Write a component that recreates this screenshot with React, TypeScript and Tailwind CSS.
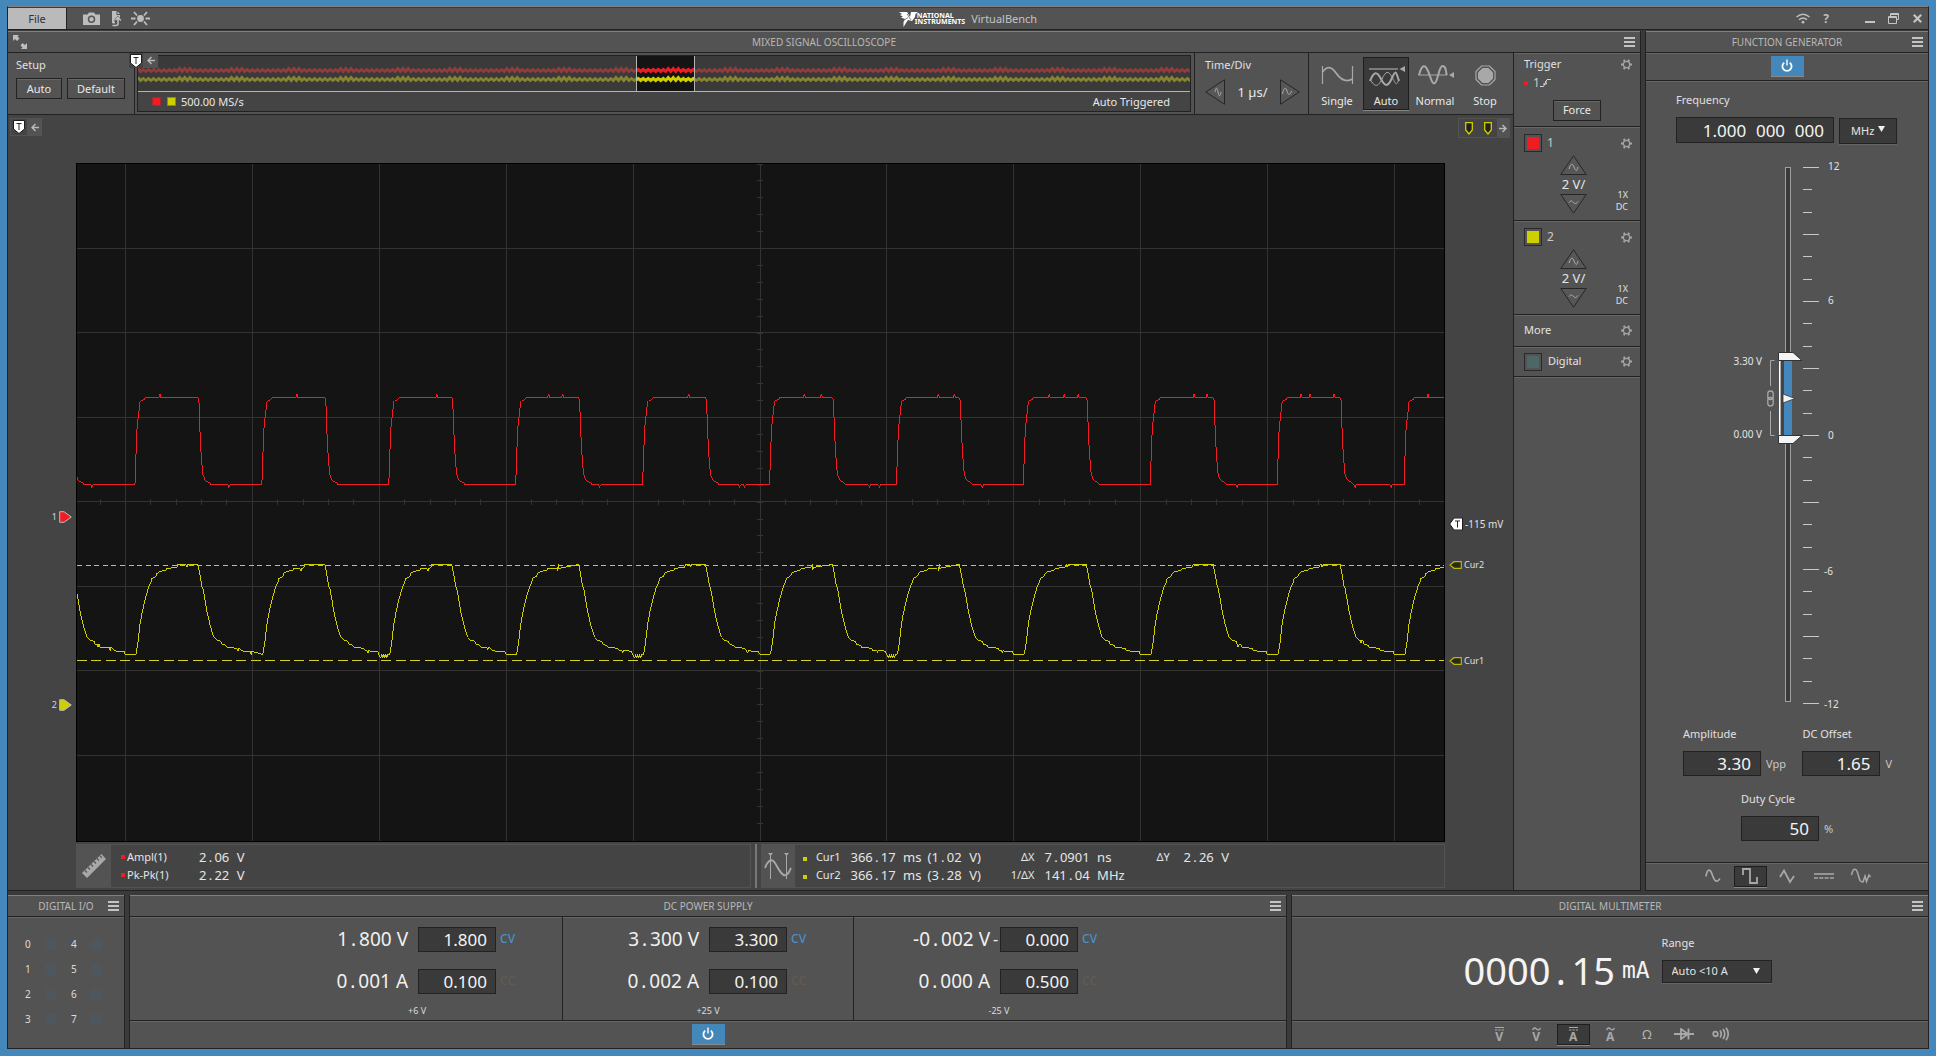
import React, { useId } from "react";

const UI = "font-['Noto_Sans',sans-serif]";

/* ---------- traces ---------- */

const PERIOD = 127;
const FIRST_EDGE = 58;
const VIEW_W = 1368;
const VIEW_H = 678;

const redCycle: [number, number][] = [
  [0, 321], [1, 292], [2, 266], [3, 256], [4, 248], [5, 238], [6, 237], [9, 236], [10, 234],
  [63, 234], [64, 237], [65, 266], [66, 287], [67, 300], [68, 311], [70, 316], [72, 318], [75, 319], [76, 321], [126, 321],
];

const yellowCycle: [number, number][] = [
  [1, 491], [3, 479], [5, 461], [7, 450], [9, 441], [11, 433], [14, 423], [16, 419], [17, 415], [21, 413], [22, 410],
  [25, 408], [31, 407], [32, 405], [42, 404], [43, 401], [63, 401], [65, 411], [67, 423], [68, 425], [70, 436],
  [72, 448], [75, 461], [77, 468], [79, 474], [82, 477], [86, 478], [87, 481], [91, 482], [92, 484], [102, 485], [103, 487],
  [108, 488], [116, 488], [117, 491], [127, 491],
];

const redSpikes = [83, 220, 360, 472, 486, 612, 728, 745, 755, 862, 878, 973, 988, 1002, 1118, 1131, 1225, 1234, 1258, 1352];
const redDips = [15, 152, 258, 261, 386, 523, 663, 668, 793, 803, 906, 1161, 1276, 1279, 1315];

const phase = (x: number) => (((x - FIRST_EDGE) % PERIOD) + PERIOD) % PERIOD;

function trace(cycle: [number, number][]) {
  const pts: [number, number][] = [];
  for (let c = -1; c < 12; c++) {
    for (const [x, y] of cycle) pts.push([FIRST_EDGE + c * PERIOD + x, y]);
  }
  return pts.filter(([x]) => x >= -3 && x <= VIEW_W + 60);
}

function withSpikes(pts: [number, number][]) {
  const extra: [number, number][] = [];
  redSpikes
    .filter((x) => phase(x) > 12 && phase(x) < 61)
    .forEach((x) => extra.push([x - 1, 234], [x, 230], [x + 1, 234]));
  redDips
    .filter((x) => phase(x) > 77 && phase(x) < 124)
    .forEach((x) => extra.push([x - 1, 321], [x, 324], [x + 1, 321]));
  return [...pts, ...extra].sort((a, b) => a[0] - b[0]);
}

const toPath = (pts: [number, number][]) => "M" + pts.map((p) => p.join(" ")).join("L");

const RED_PATH = toPath(withSpikes(trace(redCycle)));

const yellowBase = trace(yellowCycle);
const yellowJitter: [number, number][] = [];
[20, 32, 109, 160, 173, 223, 290, 350, 410, 480, 545, 613, 670, 735, 800, 861, 925, 990, 1161, 1245, 1284].forEach((x) => {
  const i = yellowBase.findIndex((p) => p[0] > x);
  if (i > 0) {
    const y = yellowBase[i - 1][1];
    yellowJitter.push([x, y], [x + 1, y + 3], [x + 2, y]);
  }
});
[304, 558, 812].forEach((x) => {
  for (let k = 0; k < 4; k++) yellowJitter.push([x + k * 2, 495], [x + k * 2 + 1, 491]);
});
const YELLOW_PATH = toPath([...yellowBase, ...yellowJitter].sort((a, b) => a[0] - b[0]));

const PREVIEW_W = 1053;
function zigzag(top: number, depth: number) {
  let d = "M0 " + top;
  for (let i = 1; i * 2.6 < PREVIEW_W + 4; i++) {
    const low = i % 2 === 1;
    const beat = i % 21 > 14 ? 0 : 1;
    d += `L${(i * 2.6).toFixed(1)} ${low ? top + depth : top + beat}`;
  }
  return d;
}
const PREVIEW_RED = zigzag(12.5, 3);
const PREVIEW_YELLOW = zigzag(21.5, 3);

/* ---------- small pieces ---------- */

/** Digits with the decimal point set in a cell as wide as a digit. */
function Num({ v, dot }: { v: string; dot: string }) {
  const parts = v.replace(/ /g, "\u2007").split(".");
  return (
    <>
      {parts[0]}
      {parts.length > 1 && <span className={`inline-block text-center ${dot}`}>.</span>}
      {parts[1]}
    </>
  );
}

function MenuButton({ label }: { label: string }) {
  return (
    <button aria-label={label} className="flex h-[10px] w-[11px] flex-col justify-between">
      <span className="h-[2px] w-full bg-[#c4c4c4]" />
      <span className="h-[2px] w-full bg-[#c4c4c4]" />
      <span className="h-[2px] w-full bg-[#c4c4c4]" />
    </button>
  );
}

function PanelHeader({ title, children }: { title: string; children?: React.ReactNode }) {
  return (
    <header className="grid h-[22px] shrink-0 grid-cols-[1fr_auto_1fr] items-center border-t border-b border-t-[#808080] border-b-[#222] px-[5px]">
      <div className="flex">{children}</div>
      <h2 className="text-[10px] leading-3 whitespace-nowrap text-[#b8b8b8]">{title}</h2>
      <div className="flex justify-end">
        <MenuButton label={`${title} menu`} />
      </div>
    </header>
  );
}

function PushButton({ children, className = "" }: { children: React.ReactNode; className?: string }) {
  return (
    <button
      className={`h-[21px] border border-[#222] bg-[#535353] text-[11px] leading-4 text-[#e8e8e8] shadow-[inset_0_1px_0_#666] ${className}`}
    >
      {children}
    </button>
  );
}

function Gear({ label }: { label: string }) {
  return (
    <button aria-label={label} className="size-[11px]">
      <svg viewBox="0 0 11 11" className="size-[11px]" fill="none" stroke="#a6a6a6">
        <circle cx="5.5" cy="5.5" r="3.2" strokeWidth="1.3" />
        <path
          d="M9 5.5H11M0 5.5H2M7.2 2.5L8.2.8M3.8 8.5L2.8 10.2M7.2 8.5L8.2 10.2M3.8 2.5L2.8.8"
          strokeWidth="2"
        />
      </svg>
    </button>
  );
}

function PowerButton({ label }: { label: string }) {
  return (
    <button
      aria-label={label}
      className="flex h-[21px] w-[33px] items-center justify-center border-b border-[#8a8a8a] bg-[#4487bb]"
    >
      <svg viewBox="0 0 14 14" className="size-[14px]" fill="none" stroke="#fff">
        <path d="M4.2 3.6A4.6 4.6 0 1 0 9.8 3.6" strokeWidth="1.8" />
        <path d="M7 .5V6.5" strokeWidth="1.4" />
      </svg>
    </button>
  );
}

function IconToggle({ label, active, children }: { label: string; active?: boolean; children: React.ReactNode }) {
  return (
    <button
      aria-label={label}
      aria-pressed={!!active}
      className={
        active
          ? "flex h-[21px] w-[33px] items-center justify-center border border-[#1e1e1e] bg-[#3a3a3a] shadow-[0_1px_0_#858585]"
          : "flex h-[21px] w-[33px] items-center justify-center"
      }
    >
      {children}
    </button>
  );
}

function NumberField({ label, value, className }: { label: string; value: string; className: string }) {
  return (
    <input
      aria-label={label}
      defaultValue={value}
      className={`rounded-none border border-[#222] bg-[#3a3a3a] pr-2 text-right text-[17px] leading-5 text-[#f4f4f4] ${className}`}
    />
  );
}

function TTag() {
  return (
    <svg viewBox="0 0 12 14" className="h-[14px] w-3 shrink-0" role="img" aria-label="Trigger position">
      <path d="M.5.5H11.5V9L6 13.5L.5 9Z" fill="#fff" stroke="#1c1c1c" />
      <path d="M3.5 3.5H8.5M6 3.5V10" stroke="#2a2a2a" fill="none" />
    </svg>
  );
}

function Arrow({ right }: { right?: boolean }) {
  return (
    <svg viewBox="0 0 8 9" className="h-[9px] w-2 shrink-0" fill="none" stroke="#b8b8b8" strokeWidth="1.5">
      {right ? <path d="M0 4.5H7M3.5 1L7 4.5L3.5 8" /> : <path d="M8 4.5H1M4.5 1L1 4.5L4.5 8" />}
    </svg>
  );
}

/* ---------- title bar ---------- */

function TitleBar() {
  return (
    <header className="grid h-[21px] shrink-0 grid-cols-[1fr_auto_1fr] items-center bg-[#535353]">
      <div className="flex h-[21px] items-center">
        <button className="h-full w-[59px] border-r border-[#222] bg-[#bababa] text-[11px] leading-4 text-[#333]">File</button>
        <button aria-label="Screenshot" className="ml-4">
          <svg viewBox="0 0 17 13" className="h-[13px] w-[17px]">
            <path d="M0 2.5H4.5L6 .5H11L12.5 2.5H17V13H0Z" fill="#bdbdbd" />
            <circle cx="8.5" cy="7.2" r="3" fill="#bdbdbd" stroke="#555" strokeWidth="1.5" />
          </svg>
        </button>
        <button aria-label="Export" className="ml-[11px]">
          <svg viewBox="0 0 11 16" className="h-4 w-[11px]">
            <path d="M1 0H5.5V4H9V7L7 4.8L3.5 8.500V12H1Z" fill="#bdbdbd" />
            <path d="M6.500 .5V3H9Z" fill="#bdbdbd" />
            <path d="M4.500 9L7 6.500L9.800 9.500M7 7V12.500Q7 14.500 5 14.500H1.500M1.500 11.800H4" stroke="#bdbdbd" strokeWidth="1.600" fill="none" />
          </svg>
        </button>
        <button aria-label="Backlight" className="ml-[9px]">
          <svg viewBox="0 0 19 15" className="h-[15px] w-[19px]" stroke="#bdbdbd" strokeWidth="1.800">
            <circle cx="9.500" cy="7.500" r="3.400" fill="#bdbdbd" stroke="none" />
            <path d="M0 7.500H4.500M14.500 7.500H19M3 1L6 4.500M16 1L13 4.500M3 14L6 10.500M16 14L13 10.500" fill="none" />
          </svg>
        </button>
      </div>
      <div className="flex items-center">
        <svg viewBox="0 0 20 16" className="h-4 w-5" role="img" aria-label="National Instruments eagle">
          <path d="M0 1H8L11 6L12 1H19L16.500 3L16 6L13 10L9 9L7 12L4.500 16V11L6 8L2 6.500L4 5.500L1 4L3 3Z" fill="#fff" />
          <path d="M8 3L12 9M5 9L9 6.500" stroke="#535353" strokeWidth=".7" />
        </svg>
        <div className="-ml-1 text-[7px] leading-[6px] font-bold text-white">
          <div className="pl-[2px]">NATIONAL</div>
          <div>INSTRUMENTS</div>
        </div>
        <h1 className="ml-[6px] text-[11px] leading-4 text-[#c4c4c4]">VirtualBench</h1>
      </div>
      <div className="flex items-center justify-end pr-[6px]">
        <svg viewBox="0 0 14 11" className="h-[11px] w-[14px]" fill="none" stroke="#bdbdbd" strokeWidth="1.500" role="img" aria-label="Wireless">
          <path d="M.5 4Q7-1.500 13.500 4M3 6.700Q7 3.200 11 6.700" />
          <circle cx="7" cy="9.200" r="1.400" fill="#bdbdbd" stroke="none" />
        </svg>
        <button aria-label="Help" className="ml-[10px] w-3 text-[12px] leading-4 font-bold text-[#bdbdbd]">?</button>
        <button aria-label="Minimize" className="ml-[33px] flex h-3 w-[10px] items-end pb-[2px]">
          <span className="h-[2px] w-full bg-[#c4c4c4]" />
        </button>
        <button aria-label="Restore" className="ml-[13px]">
          <svg viewBox="0 0 11 11" className="size-[11px]" fill="none" stroke="#c4c4c4">
            <path d="M2.500 3.500V.5H10.500V6.500H8.500M2.500 1.500H10.500" />
            <path d="M.5 3.500H8.500V10.500H.5ZM.5 4.500H8.500" />
          </svg>
        </button>
        <button aria-label="Close" className="ml-[14px]">
          <svg viewBox="0 0 9 9" className="size-[9px]" stroke="#c4c4c4" strokeWidth="2.200">
            <path d="M.8.8L8.200 8.200M8.200.8L.8 8.200" />
          </svg>
        </button>
      </div>
    </header>
  );
}

/* ---------- oscilloscope toolbar ---------- */

function PreviewTraces({ red, yellow }: { red: string; yellow: string }) {
  return (
    <svg viewBox="0 0 1053 35" preserveAspectRatio="none" className="h-full w-full" fill="none" strokeWidth="2.800">
      <path d={PREVIEW_RED} stroke={red} />
      <path d={PREVIEW_YELLOW} stroke={yellow} />
    </svg>
  );
}

function Preview() {
  return (
    <div className="relative my-[2px] mr-[3px] ml-[2px] flex min-w-0 flex-1 flex-col border border-[#222] bg-[#444]">
      <div className="relative h-[36px] border-b border-[#b4b4b4] bg-[#3a3a3a]">
        <PreviewTraces red="#933c3e" yellow="#868430" />
        <div className="absolute inset-y-0 left-[47.300%] w-[5.600%] overflow-hidden border-x border-[#b4b4b4] bg-[#141414]">
          <svg viewBox="498 0 59 35" preserveAspectRatio="none" className="h-full w-full" fill="none" strokeWidth="3">
            <path d={PREVIEW_RED} stroke="#f01c24" />
            <path d={PREVIEW_YELLOW} stroke="#cfcf00" />
          </svg>
        </div>
      </div>
      <div className="flex flex-1 items-center px-3 text-[11px] leading-4 text-[#e8e8e8]">
        <span className="mr-[6px] ml-[2px] size-[9px] border border-[#a3272b] bg-[#f01c24]" />
        <span className="mr-[5px] size-[9px] border border-[#8a8a20] bg-[#cfcf00]" />
        <span className="flex-1">500.00 MS/s</span>
        <span className="mr-2">Auto Triggered</span>
      </div>
      <div className="absolute -top-[3px] -left-[9px] flex h-[15px] w-[29px] items-center justify-between bg-[#535353] pr-[3px]">
        <span className="flex h-full w-[14px] items-center justify-center bg-[#444]">
          <TTag />
        </span>
        <Arrow />
      </div>
    </div>
  );
}

function SideArrow({ right, label }: { right?: boolean; label: string }) {
  return (
    <button aria-label={label}>
      <svg viewBox="0 0 20 26" className="h-[26px] w-5" fill="none">
        <g transform={right ? "translate(20 0) scale(-1 1)" : undefined}>
          <path d="M19.500.8V25.200L.8 13Z" stroke="#262626" fill="#575757" />
        </g>
        {right ? (
          <path d="M2.500 15C4 8 6 8 7 12S10 17 11.500 12" stroke="#b0b0b0" />
        ) : (
          <path d="M10 13C11 8 12 8 13 13S15 18 16 13" stroke="#b0b0b0" />
        )}
      </svg>
    </button>
  );
}

function ModeButton({ label, active, width, children }: { label: string; active?: boolean; width: string; children: React.ReactNode }) {
  return (
    <button
      aria-pressed={!!active}
      className={`flex h-[53px] flex-col items-center border text-[11px] leading-4 text-[#e8e8e8] ${width} ${
        active ? "border-[#1e1e1e] bg-[#3a3a3a] shadow-[0_1px_0_#858585]" : "border-transparent"
      }`}
    >
      <svg viewBox="0 0 37 24" className="mt-[5px] mb-[6px] h-6 w-[37px]" fill="none" stroke="#a8a8a8" strokeWidth="1.600">
        {children}
      </svg>
      {label}
    </button>
  );
}

function ScopeToolbar() {
  return (
    <div className="flex h-[62px] shrink-0 border-b border-[#222]">
      <div className="w-[127px] border-r border-[#222] pt-1 pl-2">
        <h3 className="text-[11px] leading-4 text-[#e0e0e0]">Setup</h3>
        <div className="mt-[5px] flex gap-[5px]">
          <PushButton className="w-[46px]">Auto</PushButton>
          <PushButton className="w-[58px]">Default</PushButton>
        </div>
      </div>
      <Preview />
      <div className="w-[115px] border-x border-[#222] pt-1 pr-2 pl-[10px]">
        <h3 className="text-[11px] leading-4 text-[#e0e0e0]">Time/Div</h3>
        <div className="mt-[6px] flex items-center justify-between">
          <SideArrow label="Decrease time per division" />
          <span className="text-[13px] leading-4 text-[#e8e8e8]">1 µs/</span>
          <SideArrow right label="Increase time per division" />
        </div>
      </div>
      <div className="flex w-[204px] justify-center gap-[2px] pt-1">
        <ModeButton label="Single" width="w-12">
          <path d="M3.500 3V21M33.500 3V21" strokeWidth="1.200" />
          <path d="M3.500 9C8 3 12 3 17 10S27 20 33.500 16" strokeWidth="1.800" />
        </ModeButton>
        <ModeButton label="Auto" active width="w-[46px]">
          <path d="M1 6H30" strokeWidth="1.200" />
          <path d="M37 3V9L31.500 6Z" fill="#a8a8a8" stroke="none" />
          <path d="M2 18C6 8 9 8 13 16S20 24 24 15S28 9 31 18" strokeWidth="2" />
          <path d="M2 16C7 25 10 24 14 16S20 7 24 14S28 24 31 16" strokeWidth="1" />
        </ModeButton>
        <ModeButton label="Normal" width="w-12">
          <path d="M1 12H30" strokeWidth="1" />
          <path d="M37 9V15L32 12Z" fill="#a8a8a8" stroke="none" />
          <path d="M2 12C5 1 8 1 11 8S15 22 18 20S22 2 26 3S28 8 30 12" strokeWidth="2" />
        </ModeButton>
        <ModeButton label="Stop" width="w-12">
          <path d="M14.500 3H22.500L28 8.500V16.500L22.500 22H14.500L9 16.500V8.500Z" strokeWidth="1.200" />
          <path d="M15.500 5H21.500L26 9.500V15.500L21.500 20H15.500L11 15.500V9.500Z" fill="#a8a8a8" stroke="none" />
        </ModeButton>
      </div>
    </div>
  );
}

/* ---------- oscilloscope chart ---------- */

const GRID_X = Array.from({ length: 11 }, (_, i) => 48.5 + i * 127);
const GRID_Y = Array.from({ length: 7 }, (_, i) => 84.5 + i * 84.6);
const TICK_X = Array.from({ length: 54 }, (_, i) => 23.1 + i * 25.4).filter((x) => x < VIEW_W);
const TICK_Y = Array.from({ length: 40 }, (_, i) => i * 16.93);

function Chart() {
  return (
    <svg
      viewBox={`0 0 ${VIEW_W} ${VIEW_H}`}
      preserveAspectRatio="none"
      className="absolute inset-0 h-full w-full"
      fill="none"
      role="img"
      aria-label="Oscilloscope traces"
    >
      <g stroke="#333" shapeRendering="crispEdges">
        {GRID_X.map((x) => <path key={`x${x}`} d={`M${x} 0V${VIEW_H}`} />)}
        {GRID_Y.map((y) => <path key={`y${y}`} d={`M0 ${y}H${VIEW_W}`} />)}
        {TICK_X.map((x) => <path key={`tx${x}`} d={`M${x} 335V342`} />)}
        {TICK_Y.map((y) => <path key={`ty${y}`} d={`M680 ${y}H687`} />)}
      </g>
      <path d="M0 402.500H1368" stroke="#cfcf00" strokeDasharray="5 3.600" shapeRendering="crispEdges" />
      <path d="M0 497.500H1368" stroke="#d4d030" strokeDasharray="10 4.500" shapeRendering="crispEdges" />
      <path d={RED_PATH} stroke="#f01c24" shapeRendering="crispEdges" />
      <path d={YELLOW_PATH} stroke="#cfcf00" shapeRendering="crispEdges" />
    </svg>
  );
}

function ChannelMarker({ n, color, top }: { n: string; color: string; top: string }) {
  return (
    <div className={`absolute right-1 flex -translate-y-1/2 items-center gap-[2px] text-[9px] leading-3 text-[#d8d8d8] ${top}`}>
      {n}
      <svg viewBox="0 0 13 12" className="h-3 w-[13px]">
        <path d="M.7.700H5L12.300 6L5 11.300H.7Z" fill={color} stroke="#bbb" />
      </svg>
    </div>
  );
}

function CursorMarker({ label, top }: { label: string; top: string }) {
  return (
    <div className={`absolute left-1 flex -translate-y-1/2 items-center gap-[2px] text-[9px] leading-3 text-[#e0e0e0] ${top}`}>
      <svg viewBox="0 0 13 8" className="h-2 w-[13px]">
        <path d="M12.300.7H5L1 4L5 7.300H12.300Z" fill="#2a2a14" stroke="#b8b410" strokeWidth="1.200" />
      </svg>
      {label}
    </div>
  );
}

function Bullet({ className }: { className: string }) {
  return <span className={`inline-block size-1 shrink-0 ${className}`} />;
}

function Readouts() {
  const dot = "w-2";
  return (
    <div className="mt-[2px] flex h-[44px] text-[13px] leading-[18px] text-[#e6e6e6]">
      <div className="flex flex-1 border border-[#535353]">
        <button aria-label="Measurements" className="flex w-[34px] items-center justify-center bg-[#535353]">
          <svg viewBox="0 0 26 26" className="size-[26px]">
            <path d="M1 20L20.500 1L25 6L6 25Z" fill="#a8a8a8" />
            <path d="M4 17.500L6 19.500M7 14.500L9 16.500M10 11.500L12 13.500M13 8.500L15 10.500M16 5.500L18 7.500M19 2.800L21 4.800" stroke="#535353" strokeWidth="1.200" />
          </svg>
        </button>
        <dl className="grid grid-cols-[78px_auto] content-center pl-[10px]">
          <dt className="flex items-center text-[11px]"><Bullet className="mr-[2px] bg-[#f01c24]" />Ampl(1)</dt>
          <dd><Num v="2.06 V" dot={dot} /></dd>
          <dt className="flex items-center text-[11px]"><Bullet className="mr-[2px] bg-[#f01c24]" />Pk-Pk(1)</dt>
          <dd><Num v="2.22 V" dot={dot} /></dd>
        </dl>
      </div>
      <div className="mx-[4px] w-[2px] bg-[#787878]" />
      <div className="flex w-[50%] border border-[#535353]">
        <button aria-label="Cursors" className="flex w-[33px] items-center justify-center bg-[#535353]">
          <svg viewBox="0 0 28 28" className="size-7" fill="none" stroke="#a8a8a8">
            <path d="M6.500 2V27M22.500 2V27" />
            <path d="M4 1H9L6.500 4ZM20 1H25L22.500 4Z" fill="#a8a8a8" stroke="none" />
            <path d="M1 16C4 8 8 6 11 11S18 25 22 23S26 17 27 16" strokeWidth="1.800" />
          </svg>
        </button>
        <table className="my-auto ml-2 table-fixed border-collapse whitespace-nowrap">
          <colgroup>
            <col className="w-3" />
            <col className="w-[26px]" />
            <col className="w-[87px]" />
            <col className="w-[64px]" />
            <col className="w-[43px]" />
            <col className="w-[122px]" />
            <col className="w-[27px]" />
            <col className="w-[60px]" />
          </colgroup>
          <tbody>
            <tr>
              <td className="p-0"><Bullet className="bg-[#cfcf00] align-middle" /></td>
              <th scope="row" className="p-0 text-right text-[11px] font-normal">Cur1</th>
              <td className="p-0 pl-[10px]"><Num v="366.17 ms" dot={dot} /></td>
              <td className="p-0"><Num v="(1.02 V)" dot={dot} /></td>
              <td className="p-0 text-right text-[11px]">ΔX</td>
              <td className="p-0 pl-[10px]"><Num v="7.0901 ns" dot={dot} /></td>
              <td className="p-0 text-[11px]">ΔY</td>
              <td className="p-0"><Num v="2.26 V" dot={dot} /></td>
            </tr>
            <tr>
              <td className="p-0"><Bullet className="bg-[#cfcf00] align-middle" /></td>
              <th scope="row" className="p-0 text-right text-[11px] font-normal">Cur2</th>
              <td className="p-0 pl-[10px]"><Num v="366.17 ms" dot={dot} /></td>
              <td className="p-0"><Num v="(3.28 V)" dot={dot} /></td>
              <td className="p-0 text-right text-[11px]">1/ΔX</td>
              <td className="p-0 pl-[10px]"><Num v="141.04 MHz" dot={dot} /></td>
              <td className="p-0" />
              <td className="p-0" />
            </tr>
          </tbody>
        </table>
      </div>
    </div>
  );
}

function ScopeBody() {
  return (
    <div className="flex flex-1 flex-col bg-[#444] pb-[2px]">
      <div className="flex h-[48px] shrink-0 items-start justify-between pt-[3px] pr-[3px] pl-[2px]">
        <div className="flex h-[18px] w-[32px] items-center justify-between border border-[#535353] bg-[#535353] pr-[2px]">
          <span className="flex h-full w-4 items-center justify-center bg-[#444]"><TTag /></span>
          <Arrow />
        </div>
        <div className="flex h-5 w-[52px] items-center justify-between border border-[#535353] bg-[#535353] pr-[2px]">
          <span className="flex h-full w-[38px] items-center justify-around bg-[#444]">
            {[0, 1].map((i) => (
              <svg key={i} viewBox="0 0 8 13" className="h-[13px] w-2">
                <path d="M.7.700H7.300V8L4 12L.7 8Z" fill="#222" stroke="#cfcf00" strokeWidth="1.300" />
              </svg>
            ))}
          </span>
          <Arrow right />
        </div>
      </div>
      <div className="flex flex-1">
        <div className="relative w-[68px] shrink-0">
          <ChannelMarker n="1" color="#f01c24" top="top-[52.200%]" />
          <ChannelMarker n="2" color="#cfcf00" top="top-[79.800%]" />
        </div>
        <div className="flex min-w-0 flex-1 flex-col">
          <div className="relative flex-1 border border-black bg-[#141414]">
            <Chart />
          </div>
        </div>
        <div className="relative w-[68px] shrink-0">
          <div className="absolute top-[53.100%] left-1 flex -translate-y-1/2 items-center gap-[2px] text-[10px] leading-3 whitespace-nowrap text-[#e0e0e0]">
            <svg viewBox="0 0 14 13" className="h-[13px] w-[14px]">
              <path d="M13.500.5H5L.7 6.500L5 12.500H13.500Z" fill="#fff" stroke="#1c1c1c" />
              <path d="M6 3.500H11M8.500 3.500V10" stroke="#2a2a2a" />
            </svg>
            -115 mV
          </div>
          <CursorMarker label="Cur2" top="top-[59.200%]" />
          <CursorMarker label="Cur1" top="top-[73.300%]" />
        </div>
      </div>
      <div className="px-[68px]">
        <Readouts />
      </div>
    </div>
  );
}

/* ---------- channel column ---------- */

function ColorCheck({ label, color }: { label: string; color: string }) {
  return (
    <input
      type="checkbox"
      defaultChecked
      aria-label={label}
      className={`size-[18px] appearance-none border border-[#2a2a2a] shadow-[inset_0_0_0_2px_#535353] ${color}`}
    />
  );
}

function TriButton({ down, label }: { down?: boolean; label: string }) {
  return (
    <button aria-label={label}>
      <svg viewBox="0 0 27 20" className="h-5 w-[27px]" fill="none">
        {down ? (
          <>
            <path d="M.8.500H26.200L13.500 19.200Z" fill="#575757" stroke="#262626" />
            <path d="M9 8.500C11 6 12 7 13.500 8.500S16 10 18 7.500" stroke="#b0b0b0" />
          </>
        ) : (
          <>
            <path d="M.8 19.500H26.200L13.500.8Z" fill="#575757" stroke="#262626" />
            <path d="M9 14C11 8 12.500 8 14 12S17 17 18 12" stroke="#b0b0b0" />
          </>
        )}
      </svg>
    </button>
  );
}

const sectionEdge = "border-b border-[#222] shadow-[inset_0_1px_0_#666]";

function Channel({ n, color }: { n: string; color: string }) {
  return (
    <section className={`h-[94px] pt-[7px] pr-2 pl-[10px] ${sectionEdge}`}>
      <div className="flex items-center">
        <ColorCheck label={`Channel ${n}`} color={color} />
        <span className="ml-[5px] flex-1 text-[12px] leading-4 text-[#c8c8c8]">{n}</span>
        <Gear label={`Channel ${n} settings`} />
      </div>
      <div className="mt-[3px] grid grid-cols-[36px_27px_1fr] items-end">
        <span />
        <div className="flex flex-col items-center">
          <TriButton label={`Channel ${n} scale up`} />
          <span className="text-[13px] leading-[19px] whitespace-nowrap text-[#e4e4e4]">2 V/</span>
          <TriButton down label={`Channel ${n} scale down`} />
        </div>
        <div className="pr-1 pb-px text-right text-[9px] leading-3 text-[#e0e0e0]">
          1X
          <br />
          DC
        </div>
      </div>
    </section>
  );
}

function ChannelColumn() {
  return (
    <aside className="flex w-[127px] shrink-0 flex-col border-l border-[#222] bg-[#535353]">
      <section className={`h-[74px] pt-[2px] pr-2 pl-[10px] ${sectionEdge}`}>
        <div className="flex items-center justify-between">
          <h3 className="text-[11px] leading-[18px] text-[#e0e0e0]">Trigger</h3>
          <Gear label="Trigger settings" />
        </div>
        <div className="flex items-center text-[12px] leading-5 text-[#c8c8c8]">
          <Bullet className="mr-[5px] bg-[#f01c24]" />1
          <svg viewBox="0 0 11 8" className="h-2 w-[11px]" fill="none" stroke="#d0d0d0" role="img" aria-label="Rising edge">
            <path d="M0 7.500H3.500L7 .5H11M3 5H6.500L5.500 2" />
          </svg>
        </div>
        <div className="mt-[3px] pl-[29px]">
          <PushButton className="w-12">Force</PushButton>
        </div>
      </section>
      <Channel n="1" color="bg-[#f01c24]" />
      <Channel n="2" color="bg-[#cfcf00]" />
      <section className={`flex h-[32px] items-center justify-between pr-2 pl-[10px] ${sectionEdge}`}>
        <h3 className="text-[11px] text-[#e4e4e4]">More</h3>
        <Gear label="More settings" />
      </section>
      <section className={`flex h-[30px] items-center pr-2 pl-[10px] ${sectionEdge}`}>
        <ColorCheck label="Digital" color="bg-[#4d6666]" />
        <span className="ml-[6px] flex-1 text-[11px] text-[#e4e4e4]">Digital</span>
        <Gear label="Digital settings" />
      </section>
      <div className="flex-1 shadow-[inset_0_1px_0_#666]" />
    </aside>
  );
}

function Oscilloscope() {
  return (
    <section className="flex min-w-0 flex-1 flex-col border-r border-b border-[#222] bg-[#535353]">
      <PanelHeader title="MIXED SIGNAL OSCILLOSCOPE">
        <button aria-label="Expand panel">
          <svg viewBox="0 0 14 14" className="size-[14px]" fill="#bdbdbd">
            <path d="M0 0H6L4.500 1.500L6.500 3.500L4 6L2 4L0 6Z" />
            <path d="M14 14H8L9.500 12.500L7.500 10.500L9.500 8L12 10L14 8Z" />
          </svg>
        </button>
      </PanelHeader>
      <div className="flex flex-1">
        <div className="flex min-w-0 flex-1 flex-col">
          <ScopeToolbar />
          <ScopeBody />
        </div>
        <ChannelColumn />
      </div>
    </section>
  );
}

/* ---------- function generator ---------- */

const TICKS = Array.from({ length: 25 }, (_, i) => i);

function OffsetSlider() {
  return (
    <div className="relative ml-[84px] mt-[22px] h-[538px] w-[110px]">
      <svg viewBox="0 0 110 538" className="h-[538px] w-[110px]" fill="none" aria-hidden="true">
        <rect x="55.500" y="1.500" width="5" height="534" fill="#3a3a3a" stroke="#a0a0a0" />
        <g stroke="#c8c8c8" shapeRendering="crispEdges">
          {TICKS.map((i) => (
            <path key={i} d={`M73 ${(1.5 + i * 22.33).toFixed(1)}h${i % 3 === 0 ? 16 : 9}`} />
          ))}
        </g>
        <rect x="54" y="193" width="8" height="77" fill="#4487bb" />
        <rect x="49" y="190" width="1.500" height="82" fill="#fff" />
        <rect x="51" y="193" width="3" height="77" fill="#444" />
        <path d="M48.500 186.500H63L72 194.500H48.500Z" fill="#f4f4f4" stroke="#333" />
        <path d="M48.500 277.500H63L72 269.500H48.500Z" fill="#f4f4f4" stroke="#333" />
        <path d="M53 228V237L65 232.500Z" fill="#f4f4f4" stroke="#333" strokeWidth=".8" />
        <path d="M44.500 194.500H40.500V220M40.500 245V269.500H44.500" stroke="#a8a8a8" />
        <g stroke="#a8a8a8" strokeWidth="1.300">
          <rect x="37.800" y="225" width="5.400" height="8.500" rx="2.700" />
          <rect x="37.800" y="231.500" width="5.400" height="8.500" rx="2.700" />
        </g>
      </svg>
      <input type="range" aria-label="High level in volts" min={-12} max={12} step={0.01} defaultValue={3.3} className="sr-only" />
      <input type="range" aria-label="Low level in volts" min={-12} max={12} step={0.01} defaultValue={0} className="sr-only" />
      <div className="text-[10px] leading-3 whitespace-nowrap text-[#e4e4e4]">
        <span className="absolute top-[189px] right-[78px]">3.30 V</span>
        <span className="absolute top-[262px] right-[78px]">0.00 V</span>
        <span className="absolute -top-[6px] left-[98px]">12</span>
        <span className="absolute top-[128px] left-[98px]">6</span>
        <span className="absolute top-[263px] left-[98px]">0</span>
        <span className="absolute top-[399px] left-[94px]">-6</span>
        <span className="absolute top-[532px] left-[94px]">-12</span>
      </div>
    </div>
  );
}

function LabeledField({ label, unit, value }: { label: string; unit: string; value: string }) {
  const id = useId();
  return (
    <div>
      <label htmlFor={id} className="block text-[11px] leading-4 text-[#e0e0e0]">{label}</label>
      <div className="mt-[9px] flex items-center gap-[5px] text-[11px] text-[#c8c8c8]">
        <input
          id={id}
          defaultValue={value}
          className="h-[25px] w-[78px] border border-[#222] bg-[#3a3a3a] pr-[9px] text-right text-[17px] leading-5 text-[#f4f4f4]"
        />
        {unit}
      </div>
    </div>
  );
}

function Caret({ className }: { className: string }) {
  return (
    <svg viewBox="0 0 7 6" className={`pointer-events-none absolute h-[6px] w-[7px] ${className}`} fill="#f0f0f0" aria-hidden="true">
      <path d="M0 0H7L3.500 6Z" />
    </svg>
  );
}

function FunctionGenerator() {
  return (
    <section className="flex w-[283px] shrink-0 flex-col border-b border-l border-[#222] bg-[#535353]">
      <PanelHeader title="FUNCTION GENERATOR" />
      <div className="flex h-[28px] items-center justify-center border-b border-[#222] shadow-[inset_0_1px_0_#666]">
        <PowerButton label="Function generator power" />
      </div>
      <div className="flex flex-1 flex-col pt-[11px] shadow-[inset_0_1px_0_#666]">
        <div className="px-[30px]">
          <label htmlFor="frequency" className="block text-[11px] leading-4 text-[#e0e0e0]">Frequency</label>
          <div className="mt-[9px] flex gap-[5px]">
            <input
              id="frequency"
              defaultValue={"1.000\u2007000\u2007000"}
              className="h-[26px] w-[158px] border border-[#222] bg-[#3a3a3a] pr-[9px] text-right text-[17px] leading-5 text-[#f4f4f4]"
            />
            <div className="relative">
              <select aria-label="Frequency unit" className="h-[26px] w-[58px] appearance-none rounded-none border border-[#222] bg-[#3a3a3a] pl-[11px] text-[11px] text-[#e4e4e4] shadow-[0_1px_0_#666]">
                <option>MHz</option>
                <option>kHz</option>
                <option>Hz</option>
              </select>
              <Caret className="top-[9px] right-3" />
            </div>
          </div>
        </div>
        <OffsetSlider />
        <div className="mt-[22px] flex justify-between pr-[36px] pl-[37px]">
          <LabeledField label="Amplitude" unit="Vpp" value="3.30" />
          <LabeledField label="DC Offset" unit="V" value="1.65" />
        </div>
        <div className="mt-[15px] flex justify-center">
          <LabeledField label="Duty Cycle" unit="%" value="50" />
        </div>
      </div>
      <div className="flex h-[28px] items-center justify-center gap-1 border-t border-[#222] pb-px shadow-[inset_0_1px_0_#666]">
        <IconToggle label="Sine wave">
          <svg viewBox="0 0 16 16" className="size-4" fill="none" stroke="#a8a8a8" strokeWidth="1.700">
            <path d="M1 8.500C2 1 5 0 7 6S11 16 15 10.500" />
          </svg>
        </IconToggle>
        <IconToggle label="Square wave" active>
          <svg viewBox="0 0 16 16" className="size-4" fill="none" stroke="#a8a8a8" strokeWidth="1.800">
            <path d="M1 7V1H8V15H15V9" />
          </svg>
        </IconToggle>
        <IconToggle label="Triangle wave">
          <svg viewBox="0 0 16 16" className="size-4" fill="none" stroke="#a8a8a8" strokeWidth="1.800">
            <path d="M1 9L5 2.500L11 14L15 8" />
          </svg>
        </IconToggle>
        <IconToggle label="DC level">
          <svg viewBox="0 0 20 8" className="h-2 w-5" fill="none" stroke="#a8a8a8" strokeWidth="1.600">
            <path d="M0 2H20" />
            <path d="M0 6H20" strokeDasharray="4 1.300" />
          </svg>
        </IconToggle>
        <IconToggle label="Arbitrary wave">
          <svg viewBox="0 0 20 16" className="h-4 w-5" fill="none" stroke="#a8a8a8" strokeWidth="1.500">
            <path d="M.5 7C2 0 5-1 7 6S9 14 12 14L14 8L15.500 13.500L18 7L19.500 9" />
          </svg>
        </IconToggle>
      </div>
    </section>
  );
}

/* ---------- bottom panels ---------- */

function DigitalIO() {
  const cell = (n: number) => (
    <label key={n} className="flex items-center text-[10px] leading-4 text-[#dcdcdc]">
      <span className="w-[20px]">{n}</span>
      <input type="checkbox" className="h-[11px] w-[11px] appearance-none bg-[#4e575e]" />
    </label>
  );
  return (
    <section className="flex w-[117px] shrink-0 flex-col border-r border-[#222] bg-[#535353]">
      <PanelHeader title="DIGITAL I/O" />
      <div className="grid flex-1 grid-cols-2 content-between gap-x-0 pt-[19px] pr-[7px] pb-[21px] pl-[17px] shadow-[inset_0_1px_0_#666]">
        {[0, 4, 1, 5, 2, 6, 3, 7].map(cell)}
      </div>
    </section>
  );
}

type Supply = { rail: string; v: string; vSet: string; a: string; aSet: string; neg?: boolean };

function SupplyColumn({ rail, v, vSet, a, aSet, neg }: Supply) {
  const row = (value: string, unit: string, set: string, mode: string, modeColor: string, minus?: boolean) => (
    <div className="grid h-[42px] grid-cols-[1fr_78px_66px] items-center">
      <div className="relative pr-[10px] text-right text-[19px] leading-6 whitespace-nowrap text-[#f0f0f0]">
        <Num v={value} dot="w-[11px]" />
        <span className="ml-[5px]">{unit}</span>
        {minus && <span className="absolute right-[2px] text-[16px]">-</span>}
      </div>
      <NumberField label={`${rail} ${mode} set point`} value={set} className="h-[25px] w-full" />
      <span className={`pl-1 text-[12px] leading-4 font-medium ${modeColor}`}>{mode}</span>
    </div>
  );
  return (
    <div className="w-[290px] shrink-0 pt-px">
      {row(v, "V", vSet, "CV", "text-[#4a90c8]", neg)}
      {row(a, "A", aSet, "CC", "text-[#635a52]")}
      <div className="mt-[3px] text-center text-[9px] leading-3 text-[#dcdcdc]">{rail}</div>
    </div>
  );
}

function PowerSupply() {
  return (
    <section className="flex min-w-0 flex-[1158_1_0%] flex-col border-x border-[#222] bg-[#535353]">
      <PanelHeader title="DC POWER SUPPLY" />
      <div className="flex flex-1 shadow-[inset_0_1px_0_#666]">
        <div className="flex flex-1 justify-end border-r border-[#222]">
          <SupplyColumn rail="+6 V" v="1.800" vSet="1.800" a="0.001" aSet="0.100" />
        </div>
        <div className="border-r border-[#222]">
          <SupplyColumn rail="+25 V" v="3.300" vSet="3.300" a="0.002" aSet="0.100" />
        </div>
        <div className="flex flex-1">
          <SupplyColumn rail="-25 V" v="-0.002" vSet="0.000" a="0.000" aSet="0.500" neg />
        </div>
      </div>
      <div className="flex h-[28px] items-center justify-center border-t border-[#222] pb-px shadow-[inset_0_1px_0_#666]">
        <PowerButton label="Power supply output" />
      </div>
    </section>
  );
}

function MeterGlyph({ letter, ac }: { letter: string; ac?: boolean }) {
  return (
    <span className="flex flex-col items-center text-[12px] leading-[11px] font-bold text-[#a8a8a8]">
      <svg viewBox="0 0 9 4" className="h-1 w-[9px]" fill="none" stroke="#a8a8a8">
        {ac ? <path d="M.5 3C2 0 3.500 1 4.500 2S7 3.500 8.500 1" strokeWidth="1.300" /> : <path d="M0 .5H9M0 3H2.300M3.300 3H5.700M6.700 3H9" />}
      </svg>
      {letter}
    </span>
  );
}

function Multimeter() {
  return (
    <section className="flex min-w-0 flex-[637_1_0%] flex-col border-l border-[#222] bg-[#535353]">
      <PanelHeader title="DIGITAL MULTIMETER" />
      <div className="flex flex-1 items-center justify-center pl-[15px] shadow-[inset_0_1px_0_#666]">
        <div className="flex items-center pt-[2px]">
          <span className="text-[38px] leading-10 text-[#f4f4f4]"><Num v="0000.15" dot="w-[21px]" /></span>
          <span className="ml-[7px] font-['DejaVu_Sans_Mono',monospace] text-[23px] leading-6 text-[#f4f4f4]">mA</span>
        </div>
        <div className="ml-3 -mt-[20px]">
          <label htmlFor="range" className="block text-[11px] leading-4 text-[#e0e0e0]">Range</label>
          <div className="relative mt-[9px]">
            <select id="range" className="block h-[23px] w-[110px] appearance-none rounded-none border border-[#222] bg-[#3a3a3a] pl-[9px] text-[11px] text-[#e4e4e4] shadow-[0_1px_0_#666]">
              <option>Auto &lt;10 A</option>
            </select>
            <Caret className="top-[8px] right-3" />
          </div>
        </div>
      </div>
      <div className="flex h-[28px] items-center justify-center gap-1 border-t border-[#222] pb-px shadow-[inset_0_1px_0_#666]">
        <IconToggle label="DC voltage"><MeterGlyph letter="V" /></IconToggle>
        <IconToggle label="AC voltage"><MeterGlyph letter="V" ac /></IconToggle>
        <IconToggle label="DC current" active><MeterGlyph letter="A" /></IconToggle>
        <IconToggle label="AC current"><MeterGlyph letter="A" ac /></IconToggle>
        <IconToggle label="Resistance"><span className="text-[13px] leading-4 text-[#b4b4b4]">Ω</span></IconToggle>
        <IconToggle label="Diode test">
          <svg viewBox="0 0 20 12" className="h-3 w-5" fill="none" stroke="#a8a8a8" strokeWidth="1.800">
            <path d="M0 6H20M7 1V11L14 6ZM14.500 .5V11.500" />
          </svg>
        </IconToggle>
        <IconToggle label="Continuity">
          <svg viewBox="0 0 18 14" className="h-[14px] w-[18px]" fill="none" stroke="#a8a8a8" strokeWidth="1.700">
            <circle cx="3.500" cy="7" r="2.300" />
            <path d="M8 3.500Q10.500 7 8 10.500M11 2Q14.500 7 11 12M14 .7Q18.500 7 14 13.300" />
          </svg>
        </IconToggle>
      </div>
    </section>
  );
}

export default function App() {
  return (
    <div className={`flex min-h-screen flex-col bg-[#4487bb] px-[7px] pt-[6px] pb-[7px] ${UI}`}>
      <div className="flex flex-1 flex-col border border-[#222] border-t-[#808080] bg-[#3a3a3a] pt-px">
        <TitleBar />
        <main className="flex flex-1 flex-col gap-[4px] border-t border-[#222] pt-px">
          <div className="flex flex-1 gap-[4px]">
            <Oscilloscope />
            <FunctionGenerator />
          </div>
          <div className="flex h-[153px] shrink-0 gap-[4px]">
            <DigitalIO />
            <PowerSupply />
            <Multimeter />
          </div>
        </main>
      </div>
    </div>
  );
}
